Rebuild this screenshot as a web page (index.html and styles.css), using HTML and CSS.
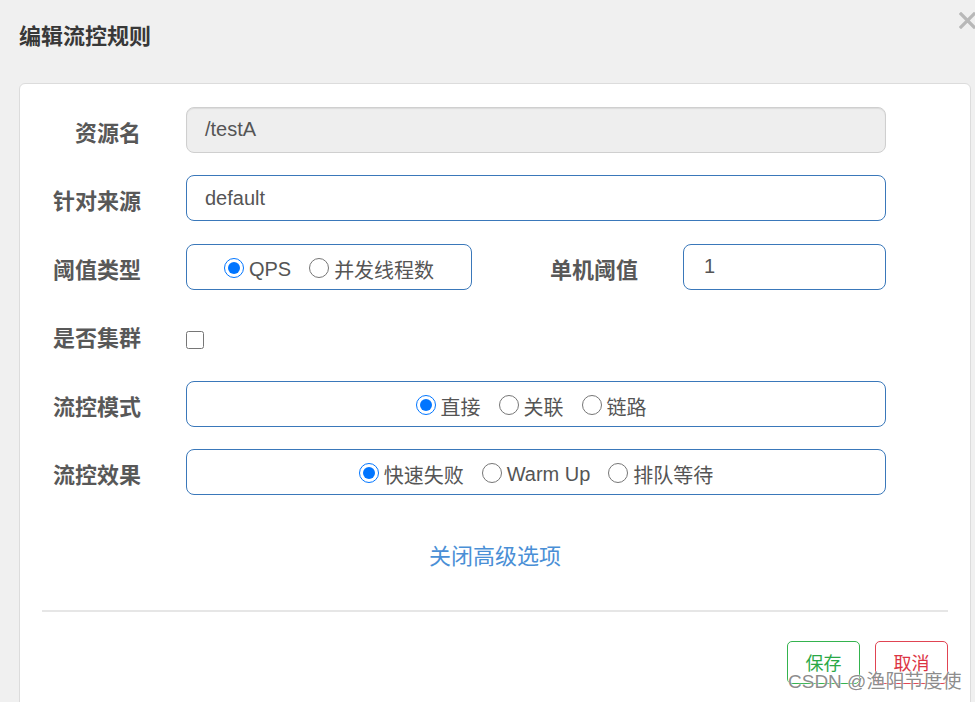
FILE: index.html
```html
<!DOCTYPE html>
<html lang="zh-CN">
<head>
<meta charset="utf-8">
<title>编辑流控规则</title>
<link rel="stylesheet" href="styles.css">
</head>
<body>
<div class="header">
  <h1 class="title">编辑流控规则</h1>
  <span class="close"><svg width="17" height="17" viewBox="0 0 17 17"><path d="M2 2 L15 15 M15 2 L2 15" stroke="#b8b8b8" stroke-width="3.2" stroke-linecap="square"/></svg></span>
</div>
<div class="card">
  <div class="form">
    <div class="row">
      <label class="label">资源名</label>
      <div class="input input-disabled">/testA</div>
    </div>
    <div class="row">
      <label class="label">针对来源</label>
      <div class="input">default</div>
    </div>
    <div class="row">
      <label class="label">阈值类型</label>
      <div class="box box-small">
        <label class="opt"><input type="radio" name="grade" checked><span>QPS</span></label>
        <label class="opt"><input type="radio" name="grade"><span>并发线程数</span></label>
      </div>
      <label class="label label-mid">单机阈值</label>
      <div class="input input-small">1</div>
    </div>
    <div class="row">
      <label class="label">是否集群</label>
      <input type="checkbox" class="check">
    </div>
    <div class="row">
      <label class="label">流控模式</label>
      <div class="box box-shift">
        <label class="opt"><input type="radio" name="mode" checked><span>直接</span></label>
        <label class="opt"><input type="radio" name="mode"><span>关联</span></label>
        <label class="opt"><input type="radio" name="mode"><span>链路</span></label>
      </div>
    </div>
    <div class="row">
      <label class="label">流控效果</label>
      <div class="box">
        <label class="opt"><input type="radio" name="effect" checked><span>快速失败</span></label>
        <label class="opt"><input type="radio" name="effect"><span>Warm Up</span></label>
        <label class="opt"><input type="radio" name="effect"><span>排队等待</span></label>
      </div>
    </div>
  </div>
  <div class="advanced">关闭高级选项</div>
  <div class="divider"></div>
  <div class="actions">
    <button class="btn btn-save">保存</button>
    <button class="btn btn-cancel">取消</button>
  </div>
</div>
<div class="watermark">CSDN @渔阳节度使</div>
</body>
</html>
```
FILE: styles.css
```css
html, body {
  margin: 0;
  padding: 0;
}
body {
  background: #f0f0f0;
  overflow: hidden;
  width: 975px;
  height: 702px;
  position: relative;
  font-family: "Liberation Sans", "Noto Sans CJK SC", sans-serif;
  color: #555;
}
.header {
  display: flex;
  justify-content: space-between;
  align-items: flex-start;
  height: 83px;
  padding-left: 19px;
  box-sizing: border-box;
}
.title {
  margin: 24px 0 0 0;
  font-size: 22px;
  line-height: 26px;
  font-weight: bold;
  color: #383838;
}
.close {
  margin-top: 12px;
  width: 16px;
  height: 17px;
  overflow: hidden;
  display: block;
}
.close svg {
  display: block;
}
.card {
  margin-left: 19px;
  width: 952px;
  box-sizing: border-box;
  height: 700px;
  background: #fff;
  border: 1px solid #dcdcdc;
  border-radius: 6px;
  padding: 23px 22px 40px;
}
.form {
  display: flex;
  flex-direction: column;
  gap: 22.4px;
}
.row {
  display: flex;
  align-items: flex-start;
  height: 46px;
}
.label {
  width: 99px;
  flex: none;
  text-align: right;
  font-size: 22px;
  font-weight: bold;
  line-height: 46px;
  padding-top: 4px;
  color: #585858;
  margin-right: 45px;
}
.label-mid {
  width: 166px;
  margin-right: 45px;
}
.input {
  width: 700px;
  height: 46px;
  box-sizing: border-box;
  border: 1px solid #3a78ba;
  border-radius: 8px;
  padding: 0 18px;
  font-size: 20px;
  line-height: 44px;
  color: #555;
  flex: none;
}
.input-disabled {
  background: #eeeeee;
  border-color: #cfcfcf;
  box-shadow: inset 0 1px 1px rgba(0, 0, 0, 0.08);
  line-height: 42px;
}
.input-small {
  width: 203px;
  padding-left: 20px;
  line-height: 42px;
}
.box {
  width: 700px;
  height: 46px;
  box-sizing: border-box;
  border: 1px solid #3a78ba;
  border-radius: 8px;
  display: flex;
  justify-content: center;
  align-items: center;
  padding-top: 6px;
  flex: none;
}
.box-small {
  width: 286px;
}
.box-shift {
  padding-right: 10px;
}
.opt {
  display: flex;
  align-items: center;
  font-size: 20px;
  color: #555;
}
.opt + .opt {
  margin-left: 18px;
}
.opt input {
  width: 20px;
  height: 20px;
  margin: 0 5px 0 0;
  position: relative;
  top: -2px;
}
.check {
  width: 18px;
  height: 18px;
  margin: 19px 0 0 0;
}
.advanced {
  margin-top: 47px;
  text-align: center;
  font-size: 22px;
  line-height: 30px;
  color: #4a8fd6;
}
.divider {
  margin-top: 38px;
  height: 2px;
  background: #e6e6e6;
}
.actions {
  margin-top: 29px;
  display: flex;
  justify-content: flex-end;
  gap: 15px;
}
.btn {
  width: 73px;
  height: 43px;
  background: #fff;
  border-radius: 5px;
  font-family: "Liberation Sans", "Noto Sans CJK SC", sans-serif;
  font-size: 18px;
  padding: 0;
  border: 1px solid;
}
.btn-save {
  color: #2aa846;
  border-color: #34b34e;
}
.btn-cancel {
  color: #dc3545;
  border-color: #e04452;
}
.watermark {
  position: absolute;
  left: 788px;
  top: 670px;
  font-size: 19px;
  line-height: 24px;
  color: rgba(110, 110, 110, 0.8);
  text-shadow: 0 0 2px #fff, 0 0 1px #fff;
  white-space: nowrap;
}
```
